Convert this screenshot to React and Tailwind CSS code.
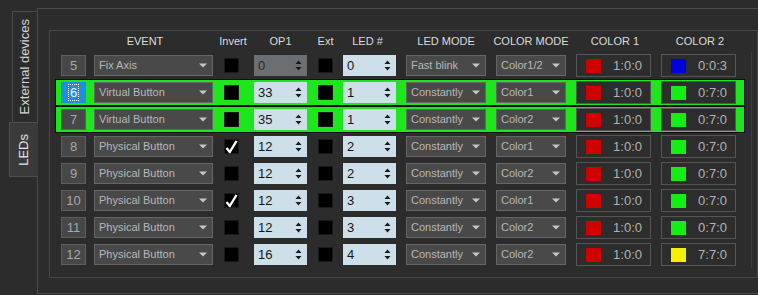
const ROWS = [
  { n: 5, event: 'Fix Axis', inv: false, op1: '0', op1Off: true, led: '0', mode: 'Fast blink', cmode: 'Color1/2', c2: 'bg-[#0000dd]', v2: '0:0:3' },
  { n: 6, event: 'Virtual Button', inv: false, op1: '33', led: '1', mode: 'Constantly', cmode: 'Color1', c2: 'bg-[#14ee14]', v2: '0:7:0', active: true, focus: true },
  { n: 7, event: 'Virtual Button', inv: false, op1: '35', led: '1', mode: 'Constantly', cmode: 'Color2', c2: 'bg-[#14ee14]', v2: '0:7:0', active: true },
  { n: 8, event: 'Physical Button', inv: true, op1: '12', led: '2', mode: 'Constantly', cmode: 'Color1', c2: 'bg-[#14ee14]', v2: '0:7:0' },
  { n: 9, event: 'Physical Button', inv: false, op1: '12', led: '2', mode: 'Constantly', cmode: 'Color2', c2: 'bg-[#14ee14]', v2: '0:7:0' },
  { n: 10, event: 'Physical Button', inv: true, op1: '12', led: '3', mode: 'Constantly', cmode: 'Color1', c2: 'bg-[#14ee14]', v2: '0:7:0' },
  { n: 11, event: 'Physical Button', inv: false, op1: '12', led: '3', mode: 'Constantly', cmode: 'Color2', c2: 'bg-[#14ee14]', v2: '0:7:0' },
  { n: 12, event: 'Physical Button', inv: false, op1: '16', led: '4', mode: 'Constantly', cmode: 'Color2', c2: 'bg-[#f4f000]', v2: '7:7:0' },
]

function Dropdown({ value, w }) {
  return (
    <div className={`${w} h-[21px] bg-[#494949] border border-[#666666] flex items-center justify-between pl-[4px] pr-[5px]`}>
      <span className="text-[11px] text-[#b8b8b8] whitespace-nowrap">{value}</span>
      <svg width="8" height="5" viewBox="0 0 8 5">
        <path d="M0 0.5h8L4 4.5z" fill="#c6c6c6" />
      </svg>
    </div>
  )
}

function Spin({ value, off }) {
  return (
    <div
      className={`w-[53px] h-[21px] flex items-center justify-between pl-[4px] pr-[5px] ${
        off ? 'bg-[#6b6f71] text-[#2a2a2a]' : 'bg-[#cddfe9] text-[#151515]'
      }`}
    >
      <span className="text-[13px] leading-none">{value}</span>
      <svg width="7" height="13" viewBox="0 0 7 13">
        <path d="M3.5 1.5L6.5 5H0.5z M0.5 8h6L3.5 11.5z" fill="#1a1a1a" />
      </svg>
    </div>
  )
}

function Check({ checked }) {
  return (
    <div className="w-[15px] h-[15px] bg-black border border-[#1a1a1a] flex items-center justify-center">
      {checked && (
        <svg width="13" height="14" viewBox="0 0 13 14">
          <path d="M1.5 8 L4.8 12 L11.5 1" stroke="#ffffff" strokeWidth="2.4" fill="none" strokeLinejoin="round" />
        </svg>
      )}
    </div>
  )
}

function ColorCell({ color, value }) {
  return (
    <div className="w-[75px] h-[23px] border border-[#555555] bg-[#2d2d2d] flex items-center justify-between pl-[9px] pr-[8px]">
      <div className={`w-[15px] h-[14px] ${color}`} />
      <span className="text-[13px] text-[#b3b3b3] leading-none">{value}</span>
    </div>
  )
}

function Row({ r }) {
  return (
    <div
      className={`flex items-center h-[27px] w-[690px] border pl-[5px] ${
        r.active ? 'bg-[#1de61d] border-[#0c0c0c]' : 'border-transparent'
      }`}
    >
      {r.focus ? (
        <div className="w-[25px] h-[21px] bg-[#1e8ee0] flex items-center justify-center">
          <span className="border border-dotted border-white text-[#eef6ff] text-[13px] leading-[15px] px-[1px]">{r.n}</span>
        </div>
      ) : (
        <div className="w-[25px] h-[21px] bg-[#474747] border border-[#5e5e5e] flex items-center justify-center text-[13px] text-[#a8a8a8]">
          {r.n}
        </div>
      )}
      <div className="ml-[8px]">
        <Dropdown value={r.event} w="w-[119px]" />
      </div>
      <div className="ml-[11px]">
        <Check checked={r.inv} />
      </div>
      <div className="ml-[15px]">
        <Spin value={r.op1} off={r.op1Off} />
      </div>
      <div className="ml-[11px]">
        <Check />
      </div>
      <div className="ml-[10px] w-[54px]">
        <Spin value={r.led} />
      </div>
      <div className="ml-[9px]">
        <Dropdown value={r.mode} w="w-[80px]" />
      </div>
      <div className="ml-[10px]">
        <Dropdown value={r.cmode} w="w-[70px]" />
      </div>
      <div className="ml-[10px]">
        <ColorCell color="bg-[#d00000]" value="1:0:0" />
      </div>
      <div className="ml-[10px]">
        <ColorCell color={r.c2} value={r.v2} />
      </div>
    </div>
  )
}

export default function App() {
  return (
    <div className="w-[758px] h-[295px] bg-[#2c2c2c] flex overflow-hidden font-['Liberation_Sans',Arial,sans-serif]">
      {/* Vertical tabs */}
      <div className="w-[37px] shrink-0 flex flex-col items-end pt-[11px]">
        <div className="w-[25px] h-[111px] border-l border-t border-[#4a4a4a] flex items-center justify-center">
          <span className="[writing-mode:vertical-rl] rotate-180 text-[13px] text-[#d4d4d4] whitespace-nowrap">External devices</span>
        </div>
        <div className="relative z-10 -mr-px w-[29px] h-[55px] bg-[#3a3a3a] border-l border-t border-b border-[#4e4e4e] flex items-center justify-center">
          <span className="[writing-mode:vertical-rl] rotate-180 text-[13px] text-[#e4e4e4] whitespace-nowrap">LEDs</span>
        </div>
      </div>

      {/* Tab panel */}
      <div className="flex-1 mt-[8px] h-[286px] border-l border-t border-b border-[#4a4a4a] pl-[11px] pt-[21px]">
        <div className="w-[709px] h-[248px] border border-[#474747]">
          {/* Header */}
          <div className="flex items-center h-[21px] ml-[5px] pl-[6px] text-[11px] text-[#dcdcdc] whitespace-nowrap">
            <div className="w-[25px]" />
            <div className="ml-[8px] w-[119px] flex justify-center pr-[17px]">EVENT</div>
            <div className="ml-[11px] w-[15px] flex justify-center pl-[3px]">Invert</div>
            <div className="ml-[15px] w-[53px] flex justify-center">OP1</div>
            <div className="ml-[11px] w-[15px] flex justify-center">Ext</div>
            <div className="ml-[10px] w-[54px] flex justify-center pr-[5px]">LED #</div>
            <div className="ml-[9px] w-[80px] flex justify-center">LED MODE</div>
            <div className="ml-[10px] w-[70px] flex justify-center">COLOR MODE</div>
            <div className="ml-[10px] w-[75px] flex justify-center pl-[3px]">COLOR 1</div>
            <div className="ml-[10px] w-[75px] flex justify-center pl-[3px]">COLOR 2</div>
          </div>

          {/* Rows */}
          <div className="ml-[5px] w-[697px] border-r border-[#3e3e3e]">
            {ROWS.map((r) => (
              <Row key={r.n} r={r} />
            ))}
          </div>
        </div>
      </div>
    </div>
  )
}
